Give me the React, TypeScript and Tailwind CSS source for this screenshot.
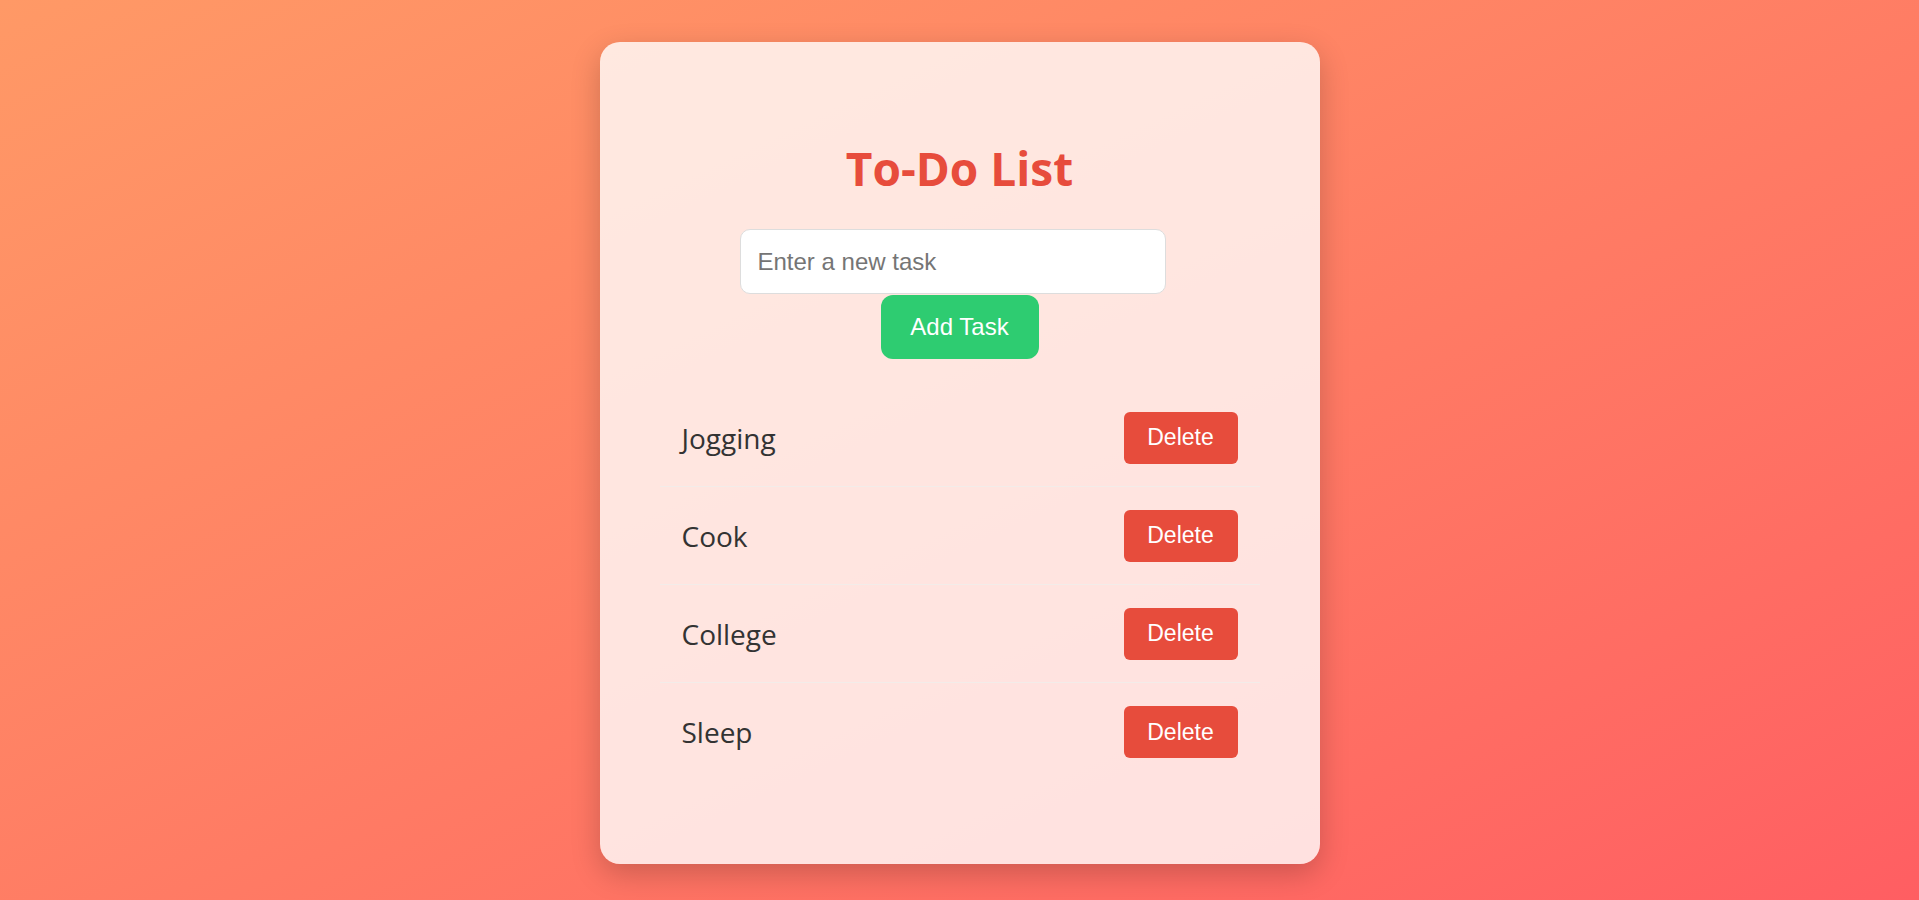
import React, { useState } from "react";

function App() {
  const [task, setTask] = useState("");
  const [tasks, setTasks] = useState<string[]>(["Jogging", "Cook", "College", "Sleep"]);

  const addTask = () => {
    if (task.trim() === "") return;
    setTasks([...tasks, task.trim()]);
    setTask("");
  };

  return (
    <div className="min-h-screen w-full bg-linear-to-br from-[#ff9966] to-[#ff5e62] pt-[42px] pb-[36px]">
      <div className="mx-auto flex h-[822px] w-[720px] flex-col items-center rounded-[20px] bg-white/80 pt-[94px] shadow-[0_10px_30px_rgba(0,0,0,0.2)]">
        <h1 className="h-[64px] text-[46px] leading-[64px] font-bold text-[#e74c3c] font-['Open_Sans',sans-serif]">
          To-Do List
        </h1>
        <input
          type="text"
          value={task}
          onChange={(e) => setTask(e.target.value)}
          placeholder="Enter a new task"
          className="mt-[29px] mr-[14px] h-[65px] w-[426px] rounded-[10px] border border-[#dddddd] bg-white pl-[17px] text-[24px] text-[#333] outline-none placeholder:text-[#757575] font-['Liberation_Sans',Arial,sans-serif]"
        />
        <button
          onClick={addTask}
          className="mt-[1px] h-[64px] w-[158px] rounded-[12px] bg-[#2ecc71] text-[24px] text-white font-['Liberation_Sans',Arial,sans-serif]"
        >
          Add Task
        </button>
        <ul className="mt-[30px] w-[600px]">
          {tasks.map((t, i) => (
            <li
              key={i}
              className="flex h-[98px] items-center justify-between border-b border-[#f3ece9] px-[22px] last:border-b-0"
            >
              <span className="text-[28px] text-[#333] font-['Open_Sans',sans-serif]">{t}</span>
              <button
                onClick={() => setTasks(tasks.filter((_, j) => j !== i))}
                className="h-[52px] w-[114px] rounded-[6px] bg-[#e74c3c] text-[23px] text-white font-['Liberation_Sans',Arial,sans-serif]"
              >
                Delete
              </button>
            </li>
          ))}
        </ul>
      </div>
    </div>
  );
}

export default App;
